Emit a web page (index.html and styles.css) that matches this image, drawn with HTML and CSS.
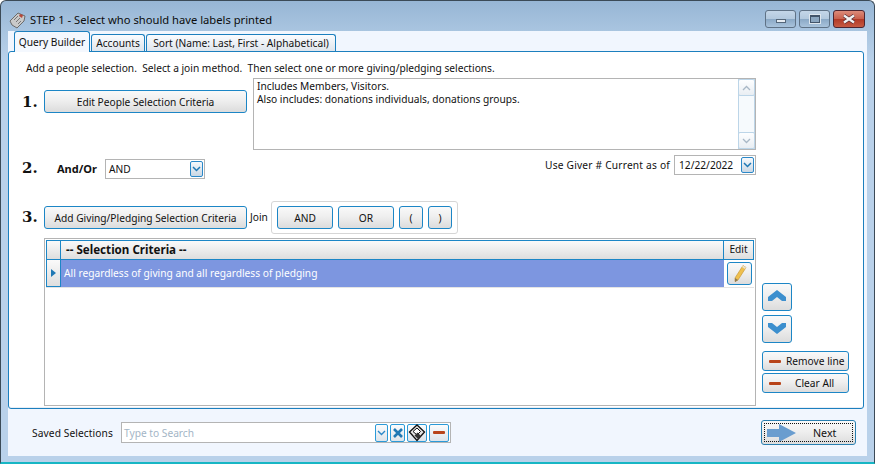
FILE: index.html
```html
<!DOCTYPE html>
<html lang="en">
<head>
<meta charset="utf-8">
<title>STEP 1</title>
<link rel="stylesheet" href="styles.css">
</head>
<body>
<div class="window">
  <header class="titlebar">
    <svg class="appicon" width="18" height="18" viewBox="0 0 18 18"><path d="M1 10 9 2l7 3-1 5-7 7-5-3z" fill="#c9c9c9" stroke="#6b6b6b"/><path d="M5 9l4-4M7 11l4-4M9 13l3-3" stroke="#777"/><path d="M11 3l3 1-1 3-3-2z" fill="#b5483a"/></svg>
    <span class="title">STEP 1 - Select who should have labels printed</span>
    <div class="winbtns">
      <span class="winbtn"><i class="glyph-min"></i></span>
      <span class="winbtn"><i class="glyph-max"></i></span>
      <span class="winbtn close"><svg width="16" height="10" viewBox="0 0 16 10"><path d="M3 1.500 13 8.500M13 1.500 3 8.500" stroke="#4c2530" stroke-width="3.600"/><path d="M3 1.500 13 8.500M13 1.500 3 8.500" stroke="#f2f2f2" stroke-width="2.400"/></svg></span>
    </div>
  </header>
  <main class="client">
    <nav class="tabs">
      <span class="tab active">Query Builder</span>
      <span class="tab tab-acc">Accounts</span>
      <span class="tab tab-sort">Sort (Name: Last, First - Alphabetical)</span>
    </nav>
    <section class="panel">
      <p class="intro">Add a people selection.&nbsp; Select a join method.&nbsp; Then select one or more giving/pledging selections.</p>
      <div class="row row1">
        <span class="num">1.</span>
        <button class="btn btn-main">Edit People Selection Criteria</button>
        <div class="memo">
          <div class="memo-text">Includes Members, Visitors.<br>Also includes: donations individuals, donations groups.</div>
          <div class="scrollbar">
            <span class="sb-btn"><svg width="9" height="6" viewBox="0 0 9 6"><path d="M1 5 4.500 1.500 8 5" fill="none" stroke="#a9b8c6" stroke-width="1.300"/></svg></span>
            <span class="sb-btn"><svg width="9" height="6" viewBox="0 0 9 6"><path d="M1 1 4.500 4.500 8 1" fill="none" stroke="#a9b8c6" stroke-width="1.300"/></svg></span>
          </div>
        </div>
      </div>
      <div class="row row2">
        <span class="num num2">2.</span>
        <b class="andor">And/Or</b>
        <div class="combo combo-join"><span>AND</span><span class="dd"><svg width="9" height="6" viewBox="0 0 9 6"><path d="M1 1 4.500 4.500 8 1" fill="none" stroke="#1f78b4" stroke-width="1.500"/></svg></span></div>
        <span class="giver">Use Giver # Current as of</span>
        <div class="combo combo-date"><span>12/22/2022</span><span class="dd"><svg width="9" height="6" viewBox="0 0 9 6"><path d="M1 1 4.500 4.500 8 1" fill="none" stroke="#1f78b4" stroke-width="1.500"/></svg></span></div>
      </div>
      <div class="row row3">
        <span class="num">3.</span>
        <button class="btn btn-main">Add Giving/Pledging Selection Criteria</button>
        <span class="join">Join</span>
        <div class="joinbox">
          <button class="btn btn-op">AND</button>
          <button class="btn btn-op">OR</button>
          <button class="btn btn-par">(</button>
          <button class="btn btn-par">)</button>
        </div>
      </div>
      <div class="row row4">
        <div class="grid">
          <div class="grid-head">
            <span class="corner"></span>
            <b class="col-main">-- Selection Criteria --</b>
            <span class="col-edit">Edit</span>
          </div>
          <div class="grid-row">
            <span class="rowhead"><svg width="5" height="8" viewBox="0 0 5 8"><path d="M0 0 5 4 0 8z" fill="#1f78b4"/></svg></span>
            <span class="cell">All regardless of giving and all regardless of pledging</span>
            <span class="cell-edit">
              <button class="btn btn-pencil"><svg width="16" height="20" viewBox="0 0 16 20"><path d="M11 1.500 14 3.500 6 16 3 17.500 3 14z" fill="#efc04e" stroke="#c8993a" stroke-width=".7"/><path d="M11 1.500 14 3.500 13 5 10 3z" fill="#e9e3cf"/><path d="M3 14 6 16 3 18z" fill="#8c7a55"/></svg></button>
            </span>
          </div>
        </div>
        <aside class="side">
          <button class="btn btn-arrow"><svg width="20" height="14" viewBox="0 0 20 14"><path d="M1 12V8L10 1l9 7v4h-4l-5-4-5 4z" fill="#3c8fce"/></svg></button>
          <button class="btn btn-arrow"><svg width="20" height="14" viewBox="0 0 20 14"><path d="M1 2v4l9 7 9-7V2h-4l-5 4-5-4z" fill="#3c8fce"/></svg></button>
          <button class="btn btn-side first"><i class="minus"></i><span>Remove line</span></button>
          <button class="btn btn-side"><i class="minus"></i><span class="clear">Clear All</span></button>
        </aside>
      </div>
    </section>
    <footer class="footer">
      <span class="saved">Saved Selections</span>
      <div class="search">
        <span class="placeholder">Type to Search</span>
        <span class="sbtn"><svg width="9" height="6" viewBox="0 0 9 6"><path d="M1 1 4.500 4.500 8 1" fill="none" stroke="#2b88c8" stroke-width="1.400"/></svg></span>
        <span class="sbtn sbtn-x"><svg width="10" height="10" viewBox="0 0 10 10"><path d="M1 1 9 9M9 1 1 9" stroke="#1f78b4" stroke-width="2.600"/></svg></span>
        <span class="sbtn wide"><svg width="18" height="18" viewBox="0 0 18 18"><path d="M1.500 8 9 1l7.500 7L9 16.500z" fill="#e4e4e4" stroke="#111" stroke-width="1.300"/><path d="M5 7.500 9 4l3.500 3.500L9 11z" fill="#fff" stroke="#111"/><path d="M6.500 11.500 10 15l3-3-3.500-3.500z" fill="#333"/></svg></span>
        <span class="sbtn wide"><i class="minus"></i></span>
      </div>
      <button class="btn btn-next">
        <span class="next-inner">
          <svg width="30" height="18" viewBox="0 0 30 18"><path d="M1 5H13V0L30 9 13 18V13H1z" fill="#6a9dcf"/></svg>
          <span>Next</span>
        </span>
      </button>
    </footer>
  </main>
</div>
</body>
</html>
```

FILE: styles.css
```css
* { box-sizing: border-box; }
html, body { margin: 0; padding: 0; }
body {
  width: 875px;
  height: 464px;
  overflow: hidden;
  background: #fff;
  font-family: "Noto Sans", "DejaVu Sans", sans-serif;
  font-size: 10.2px;
  color: #111;
}
button { font: inherit; color: inherit; padding: 0; }
.window {
  width: 875px;
  height: 464px;
  display: flex;
  flex-direction: column;
  padding: 0 8px 6px 8px;
  border: 1px solid #3b4a57;
  border-bottom: 2px solid #18b6c4;
  border-radius: 6px 6px 0 0;
  background: linear-gradient(#97b6d5 0, #a9c5e0 30px, #b9d1ea 60px, #b9d1ea 100%);
}
.titlebar {
  height: 30px;
  flex: none;
  display: flex;
  align-items: center;
  padding-top: 7px;
}
.appicon { flex: none; margin-right: 3px; }
.title { font-size: 11.2px; color: #0c0c0c; }
.winbtns { margin-left: auto; display: flex; gap: 3px; margin-right: 1px; align-self: flex-start; padding-top: 2px; }
.winbtn {
  width: 31px;
  height: 18px;
  border: 1px solid #5f7286;
  border-radius: 3px;
  background: linear-gradient(#c4d6e8 0, #b3c9de 48%, #8ba9c6 52%, #a9c3dc 100%);
  display: flex;
  align-items: center;
  justify-content: center;
}
.winbtn.close { width: 32px; background: linear-gradient(#dc8b7a 0, #c9614e 48%, #b23a27 52%, #c65a43 100%); border-color: #4c2530; }
.glyph-min { width: 10px; height: 4px; background: #e6ecf2; border: 1px solid #55677a; display: block; margin-top: 4px; }
.glyph-max { width: 10px; height: 8px; background: #8ba6c0; border: 1px solid #42546a; border-top-width: 2px; display: block; box-shadow: 0 0 0 1px #dde6ee; }
.client {
  flex: 1;
  min-height: 0;
  margin: 0 -1px;
  width: 859px;
  display: flex;
  flex-direction: column;
  background: #f1f6fe;
}
.tabs { height: 20px; flex: none; display: flex; align-items: flex-end; padding-left: 6px; position: relative; z-index: 1; }
.tab {
  height: 17px;
  border: 1px solid #1c7fbe;
  border-bottom: 0;
  border-radius: 3px 3px 0 0;
  background: linear-gradient(#fafcff, #dfe5ec);
  display: flex;
  align-items: center;
  justify-content: center;
  margin-right: 1px;
}
.tab.active { width: 76px; height: 21px; margin-bottom: -1px; background: #f4f8fe; }
.tab-acc { width: 54px; }
.tab-sort { width: 190px; }
.panel {
  width: 856px;
  height: 358px;
  flex: none;
  background: #fff;
  border: 1px solid #1c7fbe;
  border-radius: 3px;
  box-shadow: inset 0 -1px 0 #e8eef5;
  padding-left: 13px;
  padding-right: 107px;
}
.intro { margin: 0; height: 26px; line-height: 33px; padding-left: 4px; color: #111; }
.row { display: flex; align-items: flex-start; }
.num {
  width: 22px;
  flex: none;
  font-family: "DejaVu Serif", "Liberation Serif", serif;
  font-weight: 700;
  font-size: 15px;
  line-height: 20px;
  color: #111;
}
.btn {
  border: 1px solid #1c86c6;
  border-radius: 3px;
  background: linear-gradient(#f9f9f9 0, #efefef 45%, #dcdcdc 100%);
  display: flex;
  align-items: center;
  justify-content: center;
  flex: none;
}
.btn-main { width: 203px; height: 23px; }
.row1 { height: 72px; }
.row1 .num { margin-top: 14px; }
.row1 .btn-main { margin-top: 12px; }
.memo {
  width: 503px;
  height: 72px;
  margin-left: 6px;
  border: 1px solid #b4b4b4;
  display: flex;
}
.memo-text { flex: 1; padding: 1px 3px 0; line-height: 13px; }
.scrollbar {
  width: 17px;
  background: #f6fafd;
  border-left: 1px solid #bcd5e8;
  border-right: 1px solid #bcd5e8;
  display: flex;
  flex-direction: column;
  justify-content: space-between;
}
.sb-btn { height: 17px; border: 1px solid #bcd5e8; border-radius: 2px; background: linear-gradient(#fdfeff, #e9eef3); display: flex; align-items: center; justify-content: center; margin: 0 -1px; }
.row2 { height: 24px; margin-top: 5px; }
.num2 { width: 35px; margin-top: 3px; }
.andor { width: 48px; margin-top: 7px; font-size: 11px; line-height: 14px; }
.combo {
  height: 20px;
  border: 1px solid #b4b4b4;
  background: #fff;
  display: flex;
  align-items: center;
  padding-left: 3px;
  padding-right: 1px;
}
.combo > span:first-child { flex: 1; }
.dd { width: 13px; height: 16px; border: 1px solid #2b88c8; border-radius: 2px; background: linear-gradient(#f6f9fc, #c9d7e4); display: flex; align-items: center; justify-content: center; }
.combo-join { width: 100px; margin-top: 4px; }
.giver { margin-left: auto; margin-right: 4px; line-height: 20px; letter-spacing: .2px; }
.combo-date { width: 82px; padding-left: 4px; }
.row3 { margin-top: 22px; height: 33px; }
.row3 .num { margin-top: 6px; }
.row3 .btn-main { margin-top: 5px; }
.join { margin-left: 3px; width: 21px; margin-top: 9px; line-height: 14px; }
.joinbox {
  width: 187px;
  height: 33px;
  border: 1px solid #d6d6d6;
  border-radius: 3px;
  background: #fff;
  display: flex;
  gap: 5px;
  padding: 4px 5px;
}
.btn-op { width: 56px; height: 23px; }
.btn-par { width: 24px; height: 23px; }
.row4 { margin-top: 4px; margin-left: 22px; width: 805px; }
.grid {
  width: 712px;
  height: 168px;
  flex: none;
  border: 1px solid #b4b4b4;
  padding: 1px 1px 0 1px;
}
.grid-head { display: flex; height: 20px; }
.corner { width: 15px; border: 1px solid #1c86c6; background: linear-gradient(#fafafa, #dedede); }
.col-main {
  width: 663px;
  border: 1px solid #1c86c6;
  border-left: 0;
  background: linear-gradient(#fafafa, #dedede);
  padding-left: 5px;
  font-size: 11.6px;
  line-height: 18px;
}
.col-edit {
  width: 30px;
  border: 1px solid #1c86c6;
  border-left: 0;
  background: linear-gradient(#fafafa, #dedede);
  text-align: center;
  line-height: 17px;
}
.grid-row { display: flex; height: 28px; border-bottom: 1px solid #e4e4e4; }
.rowhead { width: 15px; border: 1px solid #1c86c6; border-top: 0; background: linear-gradient(#fafafa, #dedede); display: flex; align-items: center; justify-content: center; }
.cell { width: 663px; background: #7d96e0; color: #fff; padding-left: 3px; line-height: 26px; }
.cell-edit { width: 30px; padding: 2px 0 0 3px; }
.btn-pencil { width: 25px; height: 23px; }
.side { margin-left: 6px; padding-top: 45px; display: flex; flex-direction: column; align-items: flex-start; }
.btn-arrow { width: 30px; height: 28px; margin-bottom: 4px; padding-bottom: 2px; }
.btn-side { width: 87px; height: 20px; justify-content: flex-start; padding-left: 6px; margin-bottom: 2px; }
.btn-side.first { margin-top: 4px; }
.btn-side span { margin-left: 5px; }
.btn-side .clear { margin-left: 14px; }
.minus { display: block; width: 12px; height: 3px; border-radius: 1px; background: #b8441a; flex: none; }
.footer { flex: 1; display: flex; align-items: center; padding-left: 24px; }
.saved { width: 89px; flex: none; letter-spacing: .1px; }
.search {
  width: 330px;
  height: 21px;
  border: 1px solid #b4b4b4;
  background: #fff;
  display: flex;
  align-items: center;
  gap: 2px;
  padding: 0 1px 0 2px;
}
.placeholder { flex: 1; color: #a3b5c6; }
.sbtn { width: 13px; height: 18px; border: 1px solid #2b9ad8; border-radius: 2px; background: linear-gradient(#fbfcfd, #dde4ea); display: flex; align-items: center; justify-content: center; flex: none; }
.sbtn-x { width: 15px; }
.sbtn.wide { width: 20px; }
.btn-next { width: 95px; height: 25px; margin-left: auto; margin-right: 11px; padding: 2px; border-color: #2a7fb0; }
.next-inner { width: 100%; height: 100%; border: 1px dotted #111; display: flex; align-items: center; padding-left: 1px; }
.next-inner span { margin-left: 17px; font-size: 10.7px; }
```
